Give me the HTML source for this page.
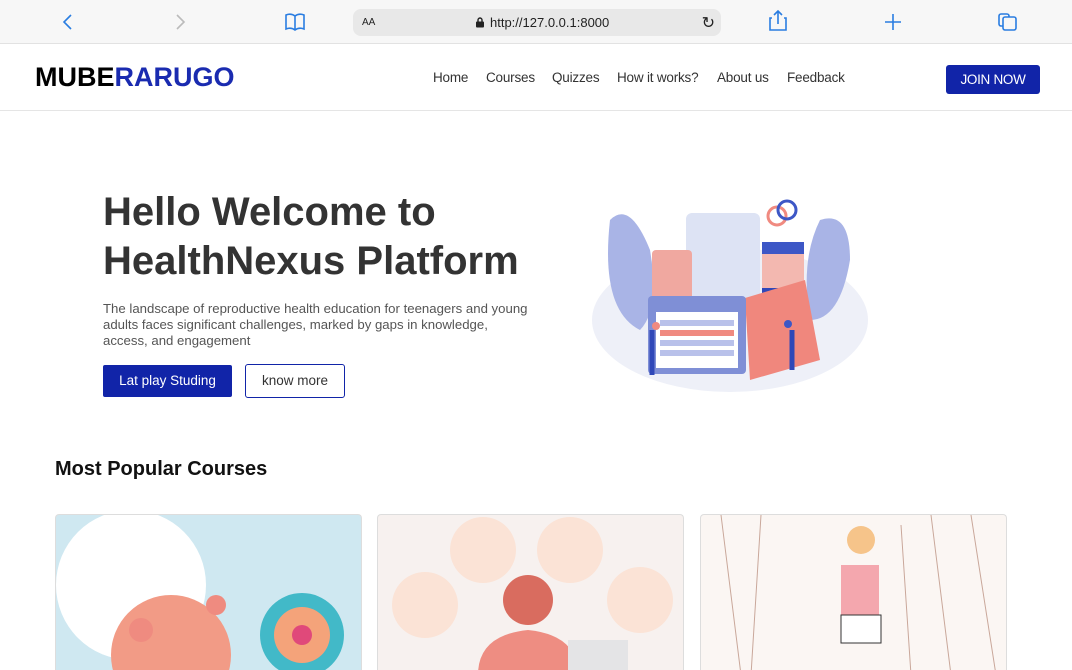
<!DOCTYPE html>
<html><head><meta charset="utf-8"><style>
*{margin:0;padding:0;box-sizing:border-box}
html,body{width:1072px;height:670px;overflow:hidden}
body{background:#fff;font-family:"Liberation Sans",sans-serif;position:relative}
.bar{position:absolute;left:0;top:0;width:1072px;height:44px;background:#f7f7f7;border-bottom:1px solid #e2e2e2}
.url{position:absolute;left:353px;top:9px;width:368px;height:27px;background:#e8e8e8;border-radius:8px;font-size:13px;color:#222}
.nav{position:absolute;top:45px;left:0;width:1072px;height:66px;border-bottom:1px solid #e5e5e5}
.logo{position:absolute;left:35px;top:17px;font-size:27px;font-weight:bold;letter-spacing:0}
.links{position:absolute;top:25px;font-size:13.5px;color:#333;letter-spacing:-0.2px}
.join{position:absolute;left:946px;top:20px;width:94px;height:29px;background:#1124a8;color:#fff;font-size:13.5px;border-radius:3px;text-align:center;line-height:29px;letter-spacing:-0.3px}
h1{position:absolute;left:103px;top:188px;font-size:40px;line-height:49px;color:#333;font-weight:bold;letter-spacing:0}
.p{position:absolute;left:103px;top:301px;width:428px;font-size:13.2px;line-height:16px;color:#555}
.b1{position:absolute;left:103px;top:365px;width:129px;height:32px;background:#1124a8;color:#fff;font-size:13.5px;text-align:center;line-height:32px;border-radius:2px}
.b2{position:absolute;left:245px;top:364px;width:100px;height:34px;border:1px solid #1124a8;font-size:13.5px;text-align:center;line-height:32px;border-radius:3px;color:#333}
h2{position:absolute;left:55px;top:458px;font-size:20px;color:#111}
.card{position:absolute;top:514px;width:307px;height:156px;border:1px solid #ddd;border-bottom:none;border-radius:4px 4px 0 0;overflow:hidden}
</style></head><body>
<div class="bar">
<svg width="1072" height="44" style="position:absolute;left:0;top:0" fill="none" stroke="#2a7de1" stroke-width="1.6">
<path d="M71 15 L64 22 L71 29"/><path d="M177 15 L184 22 L177 29" stroke="#bbb"/>
<path d="M286 15 q5-2 9 1 q4-3 9-1 v14 q-5-2-9 1 q-4-3-9-1z M295 16 v14"/>
<path d="M772 18 h-2 v12 h16 v-12 h-2 M778 24 v-13 M774 15 l4-4 4 4"/>
<path d="M885 22 h16 M893 14 v16"/>
<rect x="999" y="14" width="10" height="12" rx="2"/><rect x="1003" y="17" width="13" height="13" rx="2" fill="#f7f7f7"/>
</svg>
<div class="url"><span style="position:absolute;left:9px;top:8px;font-size:10px">AA</span>
<svg style="position:absolute;left:123px;top:8px" width="9" height="11"><rect x="0" y="4.5" width="8" height="6" rx="1" fill="#222"/><path d="M2 5 v-2 a2 2 0 0 1 4 0 v2" stroke="#222" fill="none" stroke-width="1.4"/></svg>
<span style="position:absolute;left:137px;top:6px">http://127.0.0.1:8000</span>
<span style="position:absolute;right:6px;top:4px;font-size:16px">↻</span></div>
</div>
<div class="nav">
<div class="logo">MUBE<span style="color:#1a2bb0">RARUGO</span></div>
<div class="links" style="left:433px">Home</div><div class="links" style="left:486px">Courses</div><div class="links" style="left:552px">Quizzes</div><div class="links" style="left:617px">How it works?</div><div class="links" style="left:717px">About us</div><div class="links" style="left:787px">Feedback</div>
<div class="join">JOIN NOW</div>
</div>
<h1>Hello Welcome to<br>HealthNexus Platform</h1>
<div class="p">The landscape of reproductive health education for teenagers and young adults faces significant challenges, marked by gaps in knowledge, access, and engagement</div>
<div class="b1">Lat play Studing</div><div class="b2">know more</div>
<svg style="position:absolute;left:580px;top:180px" width="290" height="220">
<ellipse cx="150" cy="140" rx="138" ry="72" fill="#eef0f8"/>
<path d="M30 40 q20-20 40 30 q10 60-10 80 q-40-20-30-110z" fill="#a9b4e6"/>
<path d="M240 40 q30-10 30 40 q-10 60-40 60 q-10-60 10-100z" fill="#a9b4e6"/>
<rect x="106" y="33" width="74" height="100" rx="6" fill="#dde3f4"/>
<rect x="72" y="70" width="40" height="60" rx="4" fill="#f0a8a0"/>
<rect x="182" y="62" width="42" height="90" fill="#f3b8b0"/><rect x="182" y="62" width="42" height="12" fill="#3d57c6"/><rect x="182" y="108" width="42" height="30" fill="#2f47b8"/>
<path d="M165 118 l60-18 l15 80 l-70 20z" fill="#f0877d"/>
<rect x="68" y="116" width="98" height="78" rx="4" fill="#7f8fd6"/><rect x="76" y="132" width="82" height="56" fill="#fff"/>
<g fill="#b9c1ea"><rect x="80" y="140" width="74" height="6"/><rect x="80" y="150" width="74" height="6" fill="#f08a80"/><rect x="80" y="160" width="74" height="6"/><rect x="80" y="170" width="74" height="6"/></g>
<circle cx="197" cy="36" r="9" fill="none" stroke="#f08a80" stroke-width="3"/><circle cx="207" cy="30" r="9" fill="none" stroke="#3d57c6" stroke-width="3"/>
<path d="M72 150 v45 M212 150 v40" stroke="#2f47b8" stroke-width="5"/>
<circle cx="76" cy="146" r="4" fill="#f08a80"/><circle cx="208" cy="144" r="4" fill="#3d57c6"/>
</svg>
<h2>Most Popular Courses</h2>
<div class="card" style="left:55px;background:#cfe8f1">
<svg width="307" height="160"><circle cx="75" cy="70" r="75" fill="#fff"/><circle cx="115" cy="140" r="60" fill="#f29b86"/><circle cx="246" cy="120" r="42" fill="#42b9c8"/><circle cx="246" cy="120" r="28" fill="#f4a37a"/><circle cx="246" cy="120" r="10" fill="#e0497a"/><circle cx="85" cy="115" r="12" fill="#ef8b80"/><circle cx="160" cy="90" r="10" fill="#ef8b80"/></svg></div>
<div class="card" style="left:377px;background:#f7f1ef">
<svg width="307" height="160"><circle cx="47" cy="90" r="33" fill="#fbe3d6"/><circle cx="105" cy="35" r="33" fill="#fbe3d6"/><circle cx="192" cy="35" r="33" fill="#fbe3d6"/><circle cx="262" cy="85" r="33" fill="#fbe3d6"/><path d="M100 160 q0-40 50-45 q50 5 50 45z" fill="#ee8d82"/><circle cx="150" cy="85" r="25" fill="#d96c5f"/><rect x="190" y="125" width="60" height="40" fill="#e4e4e6"/></svg></div>
<div class="card" style="left:700px;background:#fbf6f3">
<svg width="307" height="160" fill="none" stroke="#c9a79a"><path d="M20 0 l20 160 M60 0 l-10 160 M230 0 l20 160 M270 0 l25 160 M200 10 l10 150"/><rect x="140" y="50" width="38" height="50" fill="#f4a7ae" stroke="none"/><rect x="140" y="100" width="40" height="28" fill="#fff" stroke="#333"/><circle cx="160" cy="25" r="14" fill="#f6c48a" stroke="none"/></svg></div>
</body></html>
